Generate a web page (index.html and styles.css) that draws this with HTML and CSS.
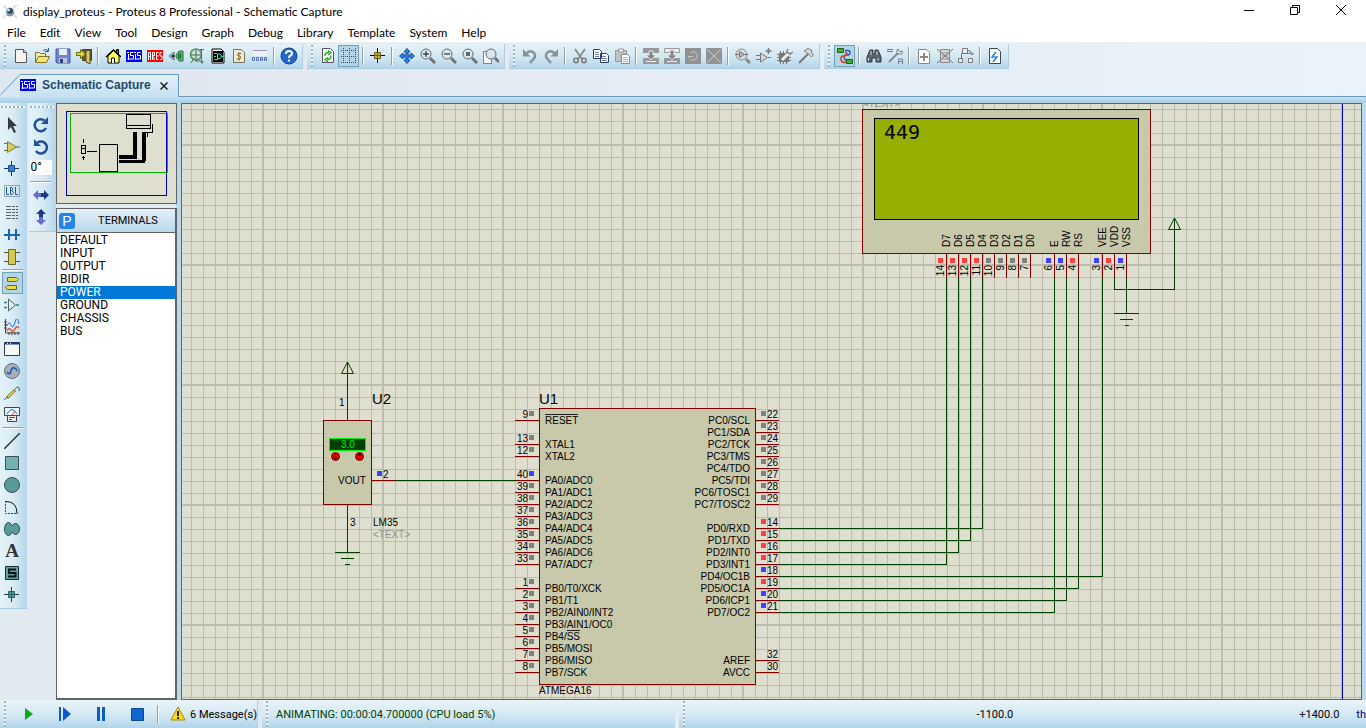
FILE: index.html
```html
<!DOCTYPE html>
<html lang="en">
<head>
<meta charset="utf-8">
<title>display_proteus - Proteus 8 Professional - Schematic Capture</title>
<link rel="stylesheet" href="styles.css">
</head>
<body>
<div class="app">
<header class="titlebar">
  <svg class="logo" viewBox="0 0 16 16"><path d="M1 2l4 2M15 1l-4 3M1 14l3-3M15 14l-3-3" stroke="#e4dfd0" stroke-width="2"/><circle cx="8" cy="8" r="4.500" fill="#a9bac6"/><circle cx="8" cy="7" r="3" fill="#2f4a60"/><circle cx="6.500" cy="6" r="1.500" fill="#c4dcec"/><path d="M5 11q4 2 7-2" stroke="#687987" fill="none"/></svg>
  <h1 class="title">display_proteus - Proteus 8 Professional - Schematic Capture</h1>
  <div class="winbtns">
    <button aria-label="Minimize"><svg viewBox="0 0 12 12"><path d="M1 6.500h10" stroke="#000"/></svg></button>
    <button aria-label="Restore"><svg viewBox="0 0 12 12"><path d="M1.500 3.500h7v7h-7zM3.500 3V1.500h7v7H9" fill="none" stroke="#000"/></svg></button>
    <button aria-label="Close"><svg viewBox="0 0 12 12"><path d="M1 1l10 10M11 1L1 11" stroke="#000"/></svg></button>
  </div>
</header>
<nav class="menu">
  <button>File</button><button>Edit</button><button>View</button><button>Tool</button><button>Design</button><button>Graph</button><button>Debug</button><button>Library</button><button>Template</button><button>System</button><button>Help</button>
</nav>
<div class="toolbars">
  <div class="bar" role="toolbar">
    <button aria-label="New"><svg viewBox="0 0 16 16"><path d="M2.500 1.500h8l3 3v10h-11z" fill="#f5f5f1" stroke="#555"/><path d="M10.500 1.500v3h3" fill="#ccc" stroke="#555"/></svg></button>
    <button aria-label="Open"><svg viewBox="0 0 16 16"><path d="M1.500 14V4.500h4l1 1h5v3" fill="#f5e9a0" stroke="#80702a"/><path d="M1.500 14.500l3-6h11l-3 6z" fill="#f7e477" stroke="#80702a"/><path d="M9 3q2-3 5-.5M14.500 0v3.500H11" fill="none" stroke="#31577e"/></svg></button>
    <button aria-label="Save"><svg viewBox="0 0 16 16"><path d="M1 1h14v14H2l-1-1z" fill="#7183d4" stroke="#4856a0"/><path d="M4 1h8v6H4z" fill="#e8edf5"/><path d="M4 10h8v5H4z" fill="#b9c4d8"/><path d="M5 11h3v4H5z" fill="#334178"/></svg></button>
    <button aria-label="Close project"><svg viewBox="0 0 16 16"><path d="M6.500 1.500h9v11h-9z" fill="#695e37" stroke="#49401e"/><path d="M10 3l4-1v14l-4-2z" fill="#dac96c" stroke="#54481d"/><path d="M.5 4.500h4v-3l5 4.500-5 4.500v-3h-4z" fill="#d8df32" stroke="#6a6d16"/></svg></button>
    <span class="sep"></span>
    <button aria-label="Home"><svg viewBox="0 0 16 16"><path d="M11.500 5V1.500h2V8" fill="#e33" stroke="#000"/><path d="M3 8v7h11V8L8.500 2.500z" fill="#ff6" stroke="#000"/><path d="M1 9l7.500-7L16 9" fill="none" stroke="#000" stroke-width="1.500"/><path d="M6.500 15v-5h3v5" fill="#fff" stroke="#000"/></svg></button>
    <button aria-label="ISIS"><svg viewBox="0 0 16 16"><path d="M0 2h16v12H0z" fill="#0000f0"/><path d="M2.500 6v6M7.500 4.500h-3v3h3V11h-6M9.500 6v6M14.500 4.500h-3v3h3V11H9M1 4.500h2M8 4.500h2" fill="none" stroke="#fff"/></svg></button>
    <button aria-label="ARES"><svg viewBox="0 0 16 16"><path d="M0 2h16v12H0z" fill="#f00"/><path d="M1.500 12V4.500h2V12M1.500 8.500h2M5.500 12V4.500h2v3h-2l2 4.500M11.500 4.500h-2v7h2M9.500 8h2M15 4.500h-2V8h2v3.500h-2" fill="none" stroke="#fff"/></svg></button>
    <button aria-label="3D viewer"><svg viewBox="0 0 16 16"><path d="M1 8l5-4v8z" fill="#c4d4df" stroke="#526b7b"/><circle cx="5" cy="8" r="1.500" fill="#224"/><path d="M8 7l3-4h4v10h-4L8 9z" fill="#62b07a" stroke="#287342"/><path d="M10 6l3-1v6l-3-1z" fill="#227a3e"/></svg></button>
    <button aria-label="Gerber viewer"><svg viewBox="0 0 16 16"><circle cx="7" cy="6.500" r="5.500" fill="#c6e0d2" stroke="#5f8a72" stroke-width="1.500"/><path d="M1.500 7h11M7 1v12M12.500 1v13M15 1.500h-4M2 15l3-5M6 13h7" stroke="#477457" fill="none"/><circle cx="13" cy="14" r="1.500" fill="#549067"/></svg></button>
    <button aria-label="Design explorer"><svg viewBox="0 0 16 16"><path d="M2 1h9l3 3v11H2z" fill="#fff" stroke="#000"/><path d="M3 3h10v11H3z" fill="#000"/><path d="M4 5.500h3M4 8.500h2M4 11.500h4" stroke="#1df04a"/><path d="M7.500 6q4-1 4 2t-4 3z" fill="#000" stroke="#2de8ef"/><path d="M11 8.500h3" stroke="#1df04a"/></svg></button>
    <button aria-label="Bill of materials"><svg viewBox="0 0 16 16"><path d="M2.500 1.500h8l3 3v10h-11z" fill="#f1eddb" stroke="#77705b"/><path d="M10.500 5.500H7q-2 1 0 2.500h2q2 1.500 0 3H5.500M8 4v9" fill="none" stroke="#817329"/></svg></button>
    <button aria-label="Source code"><svg viewBox="0 0 16 16"><path d="M1 2h14v6H1z" fill="#edf1f5"/><path d="M1 2.500h14" stroke="#99a"/><path d="M.5 9.500h2v3h-2zM4.500 9.500h2v3h-2zM8.500 13V9.500h2V13M12.500 13V9.500h2V13M8.500 11.500h2M12.500 11.500h2" fill="none" stroke="#5973ba"/></svg></button>
    <span class="sep"></span>
    <button aria-label="Help"><svg class="big" viewBox="0 0 18 18"><circle cx="9" cy="9" r="8" fill="#2467c9" stroke="#174590"/><path d="M6 7q0-3 3-3t3 2.500q0 1.500-2 2.500-1 .5-1 2" fill="none" stroke="#fff" stroke-width="2"/><path d="M8 12.500h2v2H8z" fill="#fff"/></svg></button>
  </div>
  <div class="bar" role="toolbar">
    <button aria-label="Redraw"><svg viewBox="0 0 16 16"><path d="M2.500.5h8l3 3v11h-11z" fill="#fff" stroke="#555"/><path d="M5 8q0-4 4-3.500M8 2.500l3 2L8 7M11 7.500q0 4-4 4M8 9.500l-3 2L8 14" fill="none" stroke="#31a42e" stroke-width="1.500"/></svg></button>
    <button class="on" aria-label="Toggle grid" aria-pressed="true"><svg viewBox="0 0 16 16"><path d="M0 2.500h16M0 8.500h16M0 14.500h16M2.500 0v16M8.500 0v16M14.500 0v16" stroke="#344650" stroke-dasharray="1 1"/></svg></button>
    <span class="sep"></span>
    <button aria-label="Origin"><svg viewBox="0 0 16 16"><path d="M7.500 0v15M0 7.500h15" stroke="#000"/><path d="M4.500 4.500h6v6h-6z" fill="#d1ba33" stroke="#665d19"/><path d="M7.500 4v7M4 7.500h7" stroke="#665d19"/></svg></button>
    <span class="sep"></span>
    <button aria-label="Pan"><svg viewBox="0 0 16 16"><path d="M8 .5l3 3.500H9v3h3V5l3.500 3-3.500 3V9H9v3h2l-3 3.500L5 12h2V9H4v2L.5 8 4 5v2h3V4H5z" fill="#2889eb" stroke="#124694"/></svg></button>
    <button aria-label="Zoom in"><svg viewBox="0 0 16 16"><circle cx="6" cy="6" r="5" fill="#d8e7ed" stroke="#626b70"/><path d="M10 10l5 5" stroke="#77736a" stroke-width="3"/><path d="M3 6h6M6 3v6" stroke="#111"/></svg></button>
    <button aria-label="Zoom out"><svg viewBox="0 0 16 16"><circle cx="6" cy="6" r="5" fill="#d8e7ed" stroke="#626b70"/><path d="M10 10l5 5" stroke="#77736a" stroke-width="3"/><path d="M3 6h6" stroke="#111"/></svg></button>
    <button aria-label="Zoom all"><svg viewBox="0 0 16 16"><circle cx="6" cy="6" r="5" fill="#d8e7ed" stroke="#626b70"/><path d="M10 10l5 5" stroke="#77736a" stroke-width="3"/><path d="M4 4h4v4H4z" fill="#666"/></svg></button>
    <button aria-label="Zoom area"><svg viewBox="0 0 16 16"><path d="M.5 3.500h8v12h-8z" fill="#fff" stroke="#111" stroke-dasharray="1 1"/><circle cx="8" cy="6" r="5" fill="#d8e7ed" stroke="#626b70"/><path d="M12 10l4 4" stroke="#77736a" stroke-width="3"/></svg></button>
  </div>
  <div class="bar" role="toolbar">
    <button aria-label="Undo"><svg viewBox="0 0 16 16"><path d="M4 6q3-4 7-2 4 3 .5 7L8 15" fill="none" stroke="#8a9299" stroke-width="2.500"/><path d="M1 1v7.500h7.500z" fill="#8a9299"/></svg></button>
    <button aria-label="Redo"><svg viewBox="0 0 16 16"><path d="M12 6Q9 2 5 4q-4 3-.5 7L8 15" fill="none" stroke="#8a9299" stroke-width="2.500"/><path d="M15 1v7.500H7.500z" fill="#8a9299"/></svg></button>
    <span class="sep"></span>
    <button aria-label="Cut"><svg viewBox="0 0 16 16"><path d="M3 1l7 10M13 1L6 11" stroke="#8e8e8e" stroke-width="2"/><circle cx="4" cy="12.500" r="2.200" fill="none" stroke="#777" stroke-width="1.500"/><circle cx="12" cy="12.500" r="2.200" fill="none" stroke="#777" stroke-width="1.500"/></svg></button>
    <button aria-label="Copy"><svg viewBox="0 0 16 16"><path d="M.5 1.500h6l2 2v7h-8zM7.500 5.500h6l2 2v7h-8z" fill="#fff" stroke="#2f3d63"/><path d="M2 4.500h4M2 6.500h4M2 8.500h4M9 8.500h4M9 10.500h5M9 12.500h5" stroke="#7184b0"/></svg></button>
    <button aria-label="Paste"><svg viewBox="0 0 16 16"><path d="M1.500 2.500h11v11h-11z" fill="#c2c2c2" stroke="#999"/><path d="M4.500 1h5v3h-5z" fill="#eee" stroke="#999"/><path d="M7.500 6.500h6l2 2v7h-8z" fill="#fff" stroke="#8b8b8b"/><path d="M9 9.500h4M9 11.500h5M9 13.500h5" stroke="#aaa"/></svg></button>
    <span class="sep"></span>
    <button aria-label="Block copy"><svg viewBox="0 0 16 16"><path d="M0 0h16v5H0zM0 10h16v6H0z" fill="#999"/><path d="M6 3h4v4h3l-5 5-5-5h3z" fill="#888" stroke="#e0e8ee"/><path d="M3 13.500h10" stroke="#eee"/></svg></button>
    <button aria-label="Block move"><svg viewBox="0 0 16 16"><path d="M.5.500h15v4H.500z" fill="#e8eef1" stroke="#999"/><path d="M0 10h16v6H0z" fill="#999"/><path d="M6 2h4v5h3l-5 5-5-5h3z" fill="#888" stroke="#e0e8ee"/><path d="M3 13.500h10" stroke="#eee"/></svg></button>
    <button aria-label="Block rotate"><svg viewBox="0 0 16 16"><path d="M0 0h16v16H0z" fill="#929292"/><path d="M5 5q3-3 6 0 3 3 0 6-2 2-5 1M3 8.500h5M5.500 11L3 8.500" fill="none" stroke="#c5c5c5"/></svg></button>
    <button aria-label="Block delete"><svg viewBox="0 0 16 16"><path d="M0 0h16v16H0z" fill="#929292"/><path d="M1 1l14 14M15 1L1 15" stroke="#ccc"/></svg></button>
    <span class="sep"></span>
    <button aria-label="Pick parts"><svg viewBox="0 0 16 16"><circle cx="6.500" cy="6.500" r="5.500" fill="#d4dce0" stroke="#888"/><path d="M11 11l4 4" stroke="#888" stroke-width="3"/><path d="M4.500 3.500v6l5-3zM0 6.500h4M9 6.500h4" fill="#bbb" stroke="#777"/></svg></button>
    <button aria-label="Make device"><svg viewBox="0 0 16 16"><path d="M4.500 5v9l7-4.500z" fill="#d5d5d5" stroke="#777"/><path d="M0 7.500h4M0 11.500h4M12 9.500h3" stroke="#777"/><path d="M12.500 0v6M9.500 3h6" stroke="#777" stroke-width="1.500"/></svg></button>
    <button aria-label="Packaging tool"><svg viewBox="0 0 16 16"><path d="M2 5h10v9H2z" fill="#777"/><path d="M0 6.500h14M0 9.500h14M0 12.500h14M3.500 3v13M6.500 3v13M9.500 3v13" stroke="#777"/><path d="M5 12l7-7" stroke="#eee" stroke-width="3"/><path d="M11 1q-2 3 0 4t5-1" fill="#eee" stroke="#888" stroke-width="1.500"/></svg></button>
    <button aria-label="Decompose"><svg viewBox="0 0 16 16"><path d="M1 15L11 5" stroke="#777" stroke-width="2"/><path d="M6 3l4-2.500 4 2-1 2 2.500 2-2 2.500-4-4z" fill="#ddd" stroke="#777"/></svg></button>
  </div>
  <div class="bar" role="toolbar">
    <button class="on" aria-label="Wire autorouter" aria-pressed="true"><svg viewBox="0 0 16 16"><path d="M8 2.500h3q2 0 2 2T11 7H9Q7 7 7 9t2 4" fill="none" stroke="#2d51cc" stroke-width="1.500"/><path d="M8 4.500q2 0 2 1.500T7.500 8H6q-2 0-2 3t3 3.500h2" fill="none" stroke="#e13a21" stroke-width="1.500"/><path d="M.5.500h6v4h-6zM9.500 11.500h6v4h-6z" fill="#41b32c" stroke="#17600f"/></svg></button>
    <span class="sep"></span>
    <button aria-label="Search"><svg viewBox="0 0 16 16"><path d="M4 2h3v4h2V2h3l3 7v5h-5v-4H6v4H1V9z" fill="#59636a" stroke="#343b41"/><path d="M2.500 10v3M12 10v3M5 3v4M11 3v4" stroke="#d1dce2"/></svg></button>
    <button aria-label="Property assignment"><svg viewBox="0 0 16 16"><path d="M0 1.500h6M0 3.500h6" stroke="#777"/><path d="M2 14l9-9" stroke="#888" stroke-width="2"/><path d="M11 1q-3 4 1 5t4-3l-2 1-2-1z" fill="#eee" stroke="#777"/><path d="M11.500 16v-5h4v5M11.500 13.500h4" fill="none" stroke="#6e818c"/></svg></button>
    <span class="sep"></span>
    <button aria-label="New sheet"><svg viewBox="0 0 16 16"><path d="M2.500 1.500h8l3 3v11h-11z" fill="#fff" stroke="#888"/><path d="M8 5v8M4 9h8" stroke="#8a8a8a" stroke-width="2"/></svg></button>
    <button aria-label="Remove sheet"><svg viewBox="0 0 16 16"><path d="M3.500 1.500h9v13h-9z" fill="#d4d8da" stroke="#888"/><path d="M5 5h6M5 8h6M5 11h6" stroke="#999"/><path d="M0 1l16 14M16 1L0 15" stroke="#777"/></svg></button>
    <button aria-label="Goto sheet"><svg viewBox="0 0 16 16"><path d="M3.500 10V5.500h8" fill="none" stroke="#777"/><path d="M.5 10.500h4v4h-4zM10.500 10.500h4v4h-4zM4.500.500h5v5h-5z" fill="#eee" stroke="#777"/><path d="M10 2.500q4 0 4 4M11.500 4.500l2.500 2.500 2-2.500" fill="none" stroke="#777"/></svg></button>
    <span class="sep"></span>
    <button aria-label="Electrical rules check"><svg viewBox="0 0 16 16"><path d="M2.500.500h8l3 3v12h-11z" fill="#fff" stroke="#3d4650"/><path d="M9 4L5 9h5l-4 5" fill="none" stroke="#2485e8" stroke-width="1.500"/></svg></button>
  </div>
</div>
<div class="tabs">
  <svg class="slope" viewBox="0 0 20 23" preserveAspectRatio="none"><path d="M0 22L20 .5V23H0z" fill="#d5e8f3"/><path d="M0 21.500L20 .5" stroke="#6b9ab9"/></svg>
  <div class="tab">
    <svg viewBox="0 0 16 12"><path d="M0 0h16v12H0z" fill="#0000f0"/><path d="M2.500 4v6M7.500 2.500h-3v3h3V9h-6M9.500 4v6M14.500 2.500h-3v3h3V9H9M1 2.500h2M8 2.500h2" fill="none" stroke="#fff"/></svg>
    <button class="tabname">Schematic Capture</button>
    <button class="tabclose" aria-label="Close tab"><svg viewBox="0 0 8 8"><path d="M.5.500l7 7M7.500.500l-7 7" stroke="#222" stroke-width="1.500"/></svg></button>
  </div>
</div>
<div class="band"></div>
<main class="work">
  <div class="tools" role="toolbar">
    <button aria-label="Selection"><svg viewBox="0 0 16 16"><path d="M4 0v13l3-3 3 6 2-1-3-6h4z" fill="#35383a"/></svg></button>
    <button aria-label="Component"><svg viewBox="0 0 16 16"><path d="M0 4.500h4M0 11.500h4M12 8h4" stroke="#5c6b41"/><path d="M3.500 2.500v11l9-5.500z" fill="#dcd063" stroke="#84792b"/></svg></button>
    <button aria-label="Junction"><svg viewBox="0 0 16 16"><path d="M7.500 0v15M0 7.500h15" stroke="#1f3550"/><path d="M4.500 4.500h6v6h-6z" fill="#3282d4" stroke="#174e94"/></svg></button>
    <button aria-label="Wire label"><svg viewBox="0 0 16 16"><path d="M.5 2.500h15v11H.500z" fill="none" stroke="#52606a" stroke-dasharray="1 1"/><path d="M2.500 4v7.500H5M6.500 4.500H8q2 1.500 0 3H6.500M8 7.500q3 2 0 4H6.500V4M11.500 4v7.500H14" fill="none" stroke="#185aa8"/></svg></button>
    <button aria-label="Text script"><svg viewBox="0 0 16 16"><path d="M2 1.500h12M2 4.500h12M2 7.500h12M2 10.500h12M2 13.500h12" stroke="#566068" stroke-dasharray="5 1 3 1"/></svg></button>
    <button aria-label="Bus"><svg viewBox="0 0 16 16"><path d="M0 8h16M5 2v11M12 2v11" stroke="#1768b3" stroke-width="2"/></svg></button>
    <button aria-label="Subcircuit"><svg viewBox="0 0 16 16"><path d="M0 3.500h16M0 12.500h16" stroke="#53502d"/><path d="M4.500.5h7v15h-7z" fill="#d9c94a" stroke="#716725"/></svg></button>
    <span class="hsep"></span>
    <button class="on" aria-label="Terminals" aria-pressed="true"><svg viewBox="0 0 16 16"><path d="M3.500 2.500h9l2 2-2 2h-9zM12.500 10.500h-9l-2 2 2 2h9z" fill="#e6d74b" stroke="#6e641c"/></svg></button>
    <button aria-label="Device pins"><svg viewBox="0 0 16 16"><path d="M4.500 2v12l7-6z" fill="#e2e9ee" stroke="#596269"/><path d="M0 5.500h4M0 10.500h4M12 8h4" stroke="#26827a" stroke-width="1.500" stroke-dasharray="3 1"/></svg></button>
    <button aria-label="Graph"><svg viewBox="0 0 16 16"><path d="M1.500 0v14H16" fill="none" stroke="#444"/><path d="M0 3h3M0 6h3M0 9h3M5 13v3M8 13v3M11 13v3M14 13v3" stroke="#444"/><path d="M3 7q2-6 4-1t4-3 4 2" fill="none" stroke="#2874d4"/><path d="M3 12q2-4 4-1t4-1 4-1" fill="none" stroke="#e2522d" stroke-width="1.500"/></svg></button>
    <button aria-label="Active popup"><svg viewBox="0 0 16 16"><path d="M.5 1.500h15v13H.500z" fill="#f7f7f7" stroke="#3c3c3c"/><path d="M1 2.500h14" stroke="#123b98" stroke-width="2"/><path d="M3 2.500h1M6 2.500h1" stroke="#fff"/></svg></button>
    <button aria-label="Generator"><svg viewBox="0 0 16 16"><circle cx="8" cy="8" r="7.500" fill="#a8afb9" stroke="#68717b"/><path d="M3 9q3 4 4-1t5-2l1 2" fill="none" stroke="#155ab2" stroke-width="1.500"/></svg></button>
    <button aria-label="Probe"><svg viewBox="0 0 16 16"><path d="M0 15l4-4M11 4q4-5 4.500 2" fill="none" stroke="#555"/><path d="M3 13l8-8" stroke="#77712a" stroke-width="3"/><path d="M4 12l6-6" stroke="#eedf4b" stroke-width="1.500"/></svg></button>
    <button aria-label="Instruments"><svg viewBox="0 0 16 16"><path d="M.5.500h15v8H.500z" fill="#e8f2fa" stroke="#444"/><path d="M3 7q5-9 10 0" fill="none" stroke="#2878cb"/><path d="M8 8l3-4" stroke="#dc4a28"/><path d="M3.500 8.500h9v6h-9z" fill="#eee" stroke="#444"/><path d="M5 10.500h6M5 12.500h3" stroke="#555"/></svg></button>
    <span class="hsep"></span>
    <button aria-label="Line"><svg viewBox="0 0 16 16"><path d="M0 16L16 0" stroke="#333" stroke-width="1.500"/></svg></button>
    <button aria-label="Box"><svg viewBox="0 0 16 16"><path d="M1.500 1.500h13v13h-13z" fill="#73b2b0" stroke="#3b5052"/></svg></button>
    <button aria-label="Circle"><svg viewBox="0 0 16 16"><circle cx="8" cy="8" r="7.500" fill="#579b99" stroke="#3b5052"/></svg></button>
    <button aria-label="Arc"><svg viewBox="0 0 16 16"><path d="M1.500 2v12.500H14" fill="none" stroke="#174db2" stroke-dasharray="2 1"/><path d="M2 2.500q11 0 11 12" fill="none" stroke="#111"/></svg></button>
    <button aria-label="Path"><svg viewBox="0 0 16 16"><ellipse cx="4.500" cy="8" rx="4" ry="6.500" fill="#589d9b" stroke="#2d4d50"/><ellipse cx="11.500" cy="8" rx="4" ry="5.500" fill="#589d9b" stroke="#2d4d50"/><path d="M6 5h4v6H6z" fill="#589d9b"/></svg></button>
    <button class="letter" aria-label="Text">A</button>
    <button aria-label="Symbol"><svg viewBox="0 0 16 16"><path d="M1.500 1.500h13v13h-13z" fill="#5ea7a1" stroke="#152c30"/><path d="M12 4.500H5V8h6.500v3.500H4" fill="none" stroke="#071013" stroke-width="2"/></svg></button>
    <button aria-label="Marker"><svg viewBox="0 0 16 16"><path d="M7.500 0v15M0 7.500h15" stroke="#334"/><path d="M4.500 4.500h6v6h-6z" fill="#4ba19c" stroke="#315c67"/><path d="M7.500 5v5M5 7.500h5" stroke="#315c67"/></svg></button>
  </div>
  <div class="side">
    <button aria-label="Rotate clockwise"><svg viewBox="0 0 16 16"><path d="M13 11A6 6 0 1 1 11.500 3.500" fill="none" stroke="#214f9c" stroke-width="2.500"/><path d="M15 0v7H8z" fill="#214f9c"/></svg></button>
    <button aria-label="Rotate anticlockwise"><svg viewBox="0 0 16 16"><path d="M3 12A6 6 0 1 0 4.500 3.500" fill="none" stroke="#214f9c" stroke-width="2.500"/><path d="M1 0v7h7z" fill="#214f9c"/></svg></button>
    <input class="angle" aria-label="Rotation angle" value="0°">
    <span class="hsep"></span>
    <button aria-label="Flip horizontally"><svg viewBox="0 0 16 16"><path d="M0 8l5-5v3h3v4H5v3z" fill="#646dca"/><path d="M16 8l-5-5v3H8v4h3v3z" fill="#173b88"/></svg></button>
    <button aria-label="Flip vertically"><svg viewBox="0 0 16 16"><path d="M8 0l5 5h-3v3H6V5H3z" fill="#173b88"/><path d="M8 16l5-5h-3V8H6v3H3z" fill="#646dca"/></svg></button>
  </div>
  <aside class="panel">
    <div class="preview">
      <svg width="119" height="99" viewBox="57 104 119 99" shape-rendering="crispEdges">
        <g fill="none" stroke-width="1"><path d="M66.500 111.500h100v84h-100z" stroke="#0000b4"/>
        <path d="M99.500 144.500h18v27h-18z" stroke="#000"/><path d="M81.500 145.500h4v8h-4zM83.500 139v4M83.500 156v4M82 148.500h3M87 151.500h10M82 157.500h3" stroke="#000"/>
        <path d="M126.500 114.500h24v14h-24zM126 125.500h25M146 132h3M152.500 124v8h-4M147.500 132v5" stroke="#000"/>
        <path d="M119 157h16v-25" stroke="#000" stroke-width="4"/><path d="M119 161.500h24.500v-29.500" stroke="#000" stroke-width="3"/><path d="M145.500 132v29" stroke="#000"/><path d="M70.500 113.500h97v59h-97z" stroke="#00b400"/></g>
      </svg>
    </div>
    <section class="picker">
      <div class="phead"><button class="pbtn" aria-label="Pick">P</button><h2>TERMINALS</h2></div>
      <ul class="list"><li>DEFAULT</li><li>INPUT</li><li>OUTPUT</li><li>BIDIR</li><li class="sel">POWER</li><li>GROUND</li><li>CHASSIS</li><li>BUS</li></ul>
    </section>
  </aside>
  <div class="canvas">
    <svg class="sheet" aria-label="Schematic">
      <g transform="translate(-182 -104)">
        <g id="grid"></g>
        <path class="edge" d="M1342.500 104v3000"/>
        <text class="muted" x="863" y="107">&lt;TEXT&gt;</text>
        <path class="body" d="M862.500 109.500h288v144h-288z"/>
        <path class="lcd" d="M874.500 118.500h264v101h-264z"/>
        <text class="digits" x="884" y="139">449</text>
        <path class="body" d="M539.500 408.500h216v276h-216z"/>
        <path class="body" d="M323.500 420.500h48v84h-48z"/>
        <path class="wire" d="M779 528.500h203.500V278M779 540.500h191.500V278M779 552.500h179.500V278M779 564.500h167.500V278M779 576.500h323.500V278M779 588.500h299.500V278M779 600.500h287.500V278M779 612.500h275.500V278M1114.500 278v11.500h60V218M1126.500 278v35M1114 313.500h25M1120 319.500h13M1125 325.500h4M347.500 397V362M395 480.500h121M347.500 528v24M335 552.500h25M341 558.500h13M345 564.500h5"/>
        <path class="tri" d="M1174.500 218l-6 11.500h12zM347.500 362l-6 11.500h12z"/>
        <path class="pin" d="M347.500 397v23M371 480.500h24M347.500 505v23"/>
        <path class="wire over" d="M545 414.500h33M567 630.500h13"/>
        <g id="pins"></g>
        <path class="meter" d="M329.500 438.500h36v12h-36z"/>
        <text class="reading" x="341" y="448">3.0</text>
        <circle class="knob" cx="335.500" cy="456.500" r="4"/><circle class="knob" cx="359.500" cy="456.500" r="4"/>
        <path class="arrow" d="M335.500 453v5M333 456l2.500 3 2.500-3M359.500 460v-5M357 457l2.500-3 2.500 3"/>
        <path fill="#4040ff" d="M377 471h5v5h-5z"/>
        <text x="339" y="406">1</text><text x="383" y="478">2</text><text x="350" y="526">3</text>
        <text x="338" y="484">VOUT</text><text x="373" y="526">LM35</text><text class="muted" x="373" y="538">&lt;TEXT&gt;</text>
        <text class="ref" x="372" y="404">U2</text><text class="ref" x="539" y="404">U1</text>
        <text x="539" y="694">ATMEGA16</text>
      </g>
    </svg>
  </div>
</main>
<footer class="status">
  <div class="bar run">
    <button aria-label="Play"><svg viewBox="0 0 16 16"><path d="M4 2v12l8-6z" fill="#0aab14"/></svg></button>
    <button aria-label="Step"><svg viewBox="0 0 16 16"><path d="M2 1h2v14H2zM6 1v14l8-7z" fill="#0d5cc4"/></svg></button>
    <button aria-label="Pause"><svg viewBox="0 0 16 16"><path d="M4 1h3v14H4zM9 1h3v14H9z" fill="#0d5cc4"/></svg></button>
    <button aria-label="Stop"><svg viewBox="0 0 16 16"><path d="M2.500 2.500h12v12h-12z" fill="#1266d0" stroke="#0c469b"/></svg></button>
    <span class="sep"></span>
    <button class="msgs"><svg viewBox="0 0 16 16"><path d="M8 1l7 13H1z" fill="#ffdb19" stroke="#a88600"/><path d="M8 5v5M8 11v2" stroke="#222" stroke-width="2"/></svg>6 Message(s)</button>
  </div>
  <div class="bar anim">ANIMATING: 00:00:04.700000 (CPU load 5%)</div>
  <div class="bar coords"><span>-1100.0</span><span>+1400.0</span><span class="unit">th</span></div>
</footer>
</div>
<script src="schematic.js"></script>
</body>
</html>
```
FILE: styles.css
```css
* { box-sizing: border-box; }
html, body { height: 100%; margin: 0; }
body { font-family: Roboto, "Liberation Sans", sans-serif; font-size: 12px; color: #000; overflow: hidden; }
button { border: 0; padding: 0; margin: 0; background: none; font: inherit; color: inherit; display: flex; align-items: center; justify-content: center; flex: none; }
svg { display: block; flex: none; }
.app { height: 100vh; display: flex; flex-direction: column; background: linear-gradient(90deg, #dfe6ee, #eaf2fa); }
.titlebar { height: 24px; flex: none; background: #fff; display: flex; align-items: center; padding: 0 2px; }
.logo { width: 16px; height: 16px; }
.title { flex: 1; margin: 0 0 0 5px; font: 400 12px/24px Lato, "Open Sans", sans-serif; white-space: nowrap; }
.winbtns { display: flex; align-self: flex-start; }
.winbtns button { width: 46px; height: 20px; }
.winbtns svg { width: 12px; height: 12px; }
.menu { height: 18px; flex: none; display: flex; gap: 14px; padding-left: 7px; background: #fff; font: 400 12px/18px Lato, "Open Sans", sans-serif; }
.toolbars { display: flex; gap: 4px; flex: none; height: 32px; padding: 1px 0 5px; border-top: 1px solid #f0f0f0; }
.bar { position: relative; display: flex; align-items: center; padding: 0 3px 0 10px; background: linear-gradient(#e6f2f8, #d3e8f3 50%, #b4d6ea); }
.bar::before { content: ""; position: absolute; left: 4px; top: 1px; bottom: 1px; width: 2px; background: repeating-linear-gradient(#9eb2bf 0 2px, #f5fafc 2px 4px); }
.toolbars .bar { border-right: 1px solid #b3cfdf; border-bottom: 1px solid #a9cce2; }
.toolbars button { width: 21px; height: 22px; }
.toolbars svg { width: 16px; height: 16px; }
.toolbars svg.big { width: 18px; height: 18px; }
.on { background: #b4d5e6; border: 1px solid #6f9fbd; }
.sep { width: 2px; height: 18px; margin: 0 3px; background: linear-gradient(90deg, #989fa4 50%, #fff 50%); flex: none; }
.tabs { display: flex; height: 23px; flex: none; align-items: stretch; border-bottom: 1px solid #6b9ab9; }
.slope { width: 20px; height: 23px; }
.tab { display: flex; align-items: center; margin-bottom: -1px; padding: 0 10px 2px 0; border-top: 1px solid #6b9ab9; border-right: 1px solid #6b9ab9; background: linear-gradient(#e3f1f8, #c4e0f2); }
.tab > svg { width: 16px; height: 12px; }
.tabname { margin-left: 6px; font: 700 12px/20px "Liberation Sans", sans-serif; color: #244a68; }
.tabclose { margin-left: 9px; padding-top: 2px; }
.tabclose svg { width: 8px; height: 8px; }
.band { height: 6px; flex: none; background: linear-gradient(#c3e0f3, #a9cfe4); }
.work { flex: 1; min-height: 0; display: flex; padding-right: 4px; background: linear-gradient(90deg, #e1e9f1 0 176px, #b9daec 176px); }
.tools, .side { position: relative; display: flex; flex-direction: column; align-items: center; align-self: flex-start; background: linear-gradient(90deg, #e4f3fa, #d7eaf4 50%, #b4d6ea); padding: 11px 3px 2px 0; border-bottom: 1px solid #a9cce2; }
.tools { width: 27px; }
.side { width: 27px; margin: 0 0 0 2px; padding: 11px 4px 3px 0; }
.tools::before, .side::before { content: ""; position: absolute; top: 3px; left: 1px; right: 2px; height: 2px; background: repeating-linear-gradient(90deg, #9eb2bf 0 2px, #f5fafc 2px 4px); }
.tools button, .side button { width: 21px; height: 22px; }
.tools svg, .side svg { width: 16px; height: 16px; }
.hsep { width: 21px; height: 2px; margin: 1px 0; background: linear-gradient(#989fa4 50%, #fff 50%); flex: none; }
.tools .letter { font: 700 19px/22px "Liberation Serif", serif; color: #333; }
.angle { width: 22px; height: 15px; margin: 2px 0 5px; border: 0; padding: 0 1px; background: #fff; font: 12px/15px Roboto, sans-serif; }
.panel { width: 121px; flex: none; display: flex; flex-direction: column; gap: 4px; }
.preview { border: 1px solid #636363; background: #dfdfcf; overflow: hidden; }
.picker { flex: 1; display: flex; flex-direction: column; border: 1px solid #636363; border-right-width: 2px; border-bottom-width: 2px; background: #fff; }
.phead { display: flex; align-items: center; height: 24px; padding-left: 2px; background: linear-gradient(#e3f0f7, #b9d9eb); border-bottom: 1px solid #636363; }
.pbtn { width: 16px; height: 16px; border-radius: 3px; background: #2484e8; color: #fff; font: 400 14px/16px "Liberation Sans", sans-serif; }
.phead h2 { flex: 1; margin: 0 0 0 6px; text-align: center; font: 400 11px/22px Roboto, sans-serif; }
.list { list-style: none; margin: 0; padding: 1px 0 0; line-height: 13px; }
.list li { padding-left: 3px; }
.sel { background: #0078d7; color: #fff; }
.canvas { flex: 1; min-width: 0; margin-left: 4px; border: 1px solid #636363; background: #dfdfcf; overflow: hidden; }
.sheet { width: 100%; height: 100%; font: 10px "Liberation Sans", sans-serif; }
.sheet path, .sheet rect { shape-rendering: crispEdges; }
.thin { stroke: #bcbcac; fill: none; }
.thick { stroke: #bcbcac; stroke-width: 2; fill: none; }
.edge { stroke: #0000c0; }
.body { fill: #c8c8aa; stroke: #800000; }
.lcd { fill: #97af00; stroke: #000; }
.wire { fill: none; stroke: #004000; }
.over { stroke: #222; }
.sheet .tri { fill: none; stroke: #004000; shape-rendering: auto; }
.pin { stroke: #800000; fill: none; }
.muted { fill: #909088; }
.ref { font-size: 15px; }
.digits { font: 400 20px "DejaVu Sans Mono", monospace; }
.meter { fill: #004000; stroke: #00f000; }
.reading { fill: #00f000; }
.knob { fill: #e80000; stroke: #800; }
.arrow { fill: none; stroke: #400; }
.end { text-anchor: end; }
.status { display: flex; gap: 4px; height: 28px; flex: none; font-size: 11px; }
.status .bar { background: linear-gradient(#e9f4fa, #d3e8f3 55%, #b0d4ea); }
.run { width: 258px; padding: 0 0 0 11px; border-right: 1px solid #b3cfdf; }
.run button { width: 36px; height: 24px; }
.run svg { width: 16px; height: 16px; }
.run .sep { margin: 0 11px 0 2px; }
.run .msgs { width: auto; gap: 4px; }
.anim { width: 413px; padding-left: 14px; color: #004000; }
.coords { flex: 1; min-width: 0; padding: 0; overflow: hidden; justify-content: flex-end; gap: 286px; }
.coords .unit { color: #000080; margin-left: -269px; }
```
FILE: schematic.js
```javascript
const NS = "http://www.w3.org/2000/svg";
const GRAY = "#808080", RED = "#ff4040", BLUE = "#4040ff";
const grid = document.getElementById("grid");
const pins = document.getElementById("pins");

function add(parent, tag, attrs, text) {
  const el = document.createElementNS(NS, tag);
  for (const key in attrs) el.setAttribute(key, attrs[key]);
  if (text) el.textContent = text;
  parent.appendChild(el);
}

// Dot pitch is slightly under twelve pixels; every tenth line is heavier.
const PITCH = 11.99;
for (let i = -20; i < 250; i++) {
  const x = Math.round(383 + i * PITCH);
  const y = Math.round(385 + (i - 20) * PITCH);
  const major = i % 10 === 0;
  add(grid, "path", { class: major ? "thick" : "thin", d: `M${major ? x : x + 0.5} 104v3000` });
  add(grid, "path", { class: major ? "thick" : "thin", d: `M182 ${major ? y : y + 0.5}h3000` });
}

const left = [
  [9, "RESET", 420], [13, "XTAL1", 444], [12, "XTAL2", 456],
  [40, "PA0/ADC0", 480, BLUE], [39, "PA1/ADC1", 492], [38, "PA2/ADC2", 504], [37, "PA3/ADC3", 516],
  [36, "PA4/ADC4", 528], [35, "PA5/ADC5", 540], [34, "PA6/ADC6", 552], [33, "PA7/ADC7", 564],
  [1, "PB0/T0/XCK", 588], [2, "PB1/T1", 600], [3, "PB2/AIN0/INT2", 612], [4, "PB3/AIN1/OC0", 624],
  [5, "PB4/SS", 636], [6, "PB5/MOSI", 648], [7, "PB6/MISO", 660], [8, "PB7/SCK", 672]
];
for (const [num, name, y, color] of left) {
  add(pins, "path", { class: "pin", d: `M515 ${y + 0.5}h24` });
  add(pins, "rect", { x: 529, y: y - 9, width: 5, height: 5, fill: color || GRAY });
  add(pins, "text", { class: "end", x: 528, y: y - 2 }, String(num));
  add(pins, "text", { x: 545, y: y + 4 }, name);
}

const right = [
  [22, "PC0/SCL", 420, GRAY], [23, "PC1/SDA", 432, GRAY], [24, "PC2/TCK", 444, GRAY], [25, "PC3/TMS", 456, GRAY],
  [26, "PC4/TDO", 468, GRAY], [27, "PC5/TDI", 480, GRAY], [28, "PC6/TOSC1", 492, GRAY], [29, "PC7/TOSC2", 504, GRAY],
  [14, "PD0/RXD", 528, RED], [15, "PD1/TXD", 540, RED], [16, "PD2/INT0", 552, RED], [17, "PD3/INT1", 564, RED],
  [18, "PD4/OC1B", 576, BLUE], [19, "PD5/OC1A", 588, RED], [20, "PD6/ICP1", 600, BLUE], [21, "PD7/OC2", 612, BLUE],
  [32, "AREF", 660, null], [30, "AVCC", 672, null]
];
for (const [num, name, y, color] of right) {
  add(pins, "path", { class: "pin", d: `M756 ${y + 0.5}h23` });
  if (color) add(pins, "rect", { x: 761, y: y - 9, width: 5, height: 5, fill: color });
  add(pins, "text", { x: 767, y: y - 2 }, String(num));
  add(pins, "text", { class: "end", x: 750, y: y + 4 }, name);
}

const display = [
  [14, "D7", 946, RED], [13, "D6", 958, RED], [12, "D5", 970, RED], [11, "D4", 982, RED],
  [10, "D3", 994, GRAY], [9, "D2", 1006, GRAY], [8, "D1", 1018, GRAY], [7, "D0", 1030, GRAY],
  [6, "E", 1054, BLUE], [5, "RW", 1066, BLUE], [4, "RS", 1078, RED],
  [3, "VEE", 1102, BLUE], [2, "VDD", 1114, RED], [1, "VSS", 1126, BLUE]
];
for (const [num, name, x, color] of display) {
  add(pins, "path", { class: "pin", d: `M${x + 0.5} 254v24` });
  add(pins, "rect", { x: x - 8, y: 258, width: 5, height: 5, fill: color });
  add(pins, "text", { class: "end", transform: `translate(${x - 2} 265) rotate(-90)` }, String(num));
  add(pins, "text", { transform: `translate(${x + 4} 247) rotate(-90)` }, name);
}
```
